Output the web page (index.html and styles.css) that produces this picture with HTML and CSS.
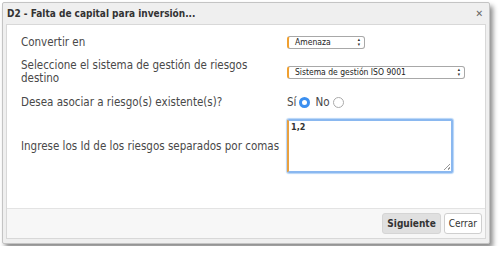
FILE: index.html
```html
<!DOCTYPE html>
<html lang="es">
<head>
    <meta charset="UTF-8">
    <title>Convertir riesgo</title>
    <link rel="stylesheet" href="styles.css">
</head>
<body>

    <div class="dialog">
        <div class="dialog-titlebar">
            <span class="dialog-title">D2 - Falta de capital para inversión...</span>
            <span class="dialog-close">&#x2715;</span>
        </div>
        <div class="dialog-panel">
            <div class="dialog-content">
                <div class="form-row">
                    <label class="form-label">Convertir en</label>
                    <div class="fake-select select-short">Amenaza</div>
                </div>
                <div class="form-row">
                    <label class="form-label">Seleccione el sistema de gestión de riesgos destino</label>
                    <div class="fake-select select-long">Sistema de gestión ISO 9001</div>
                </div>
                <div class="form-row">
                    <label class="form-label">Desea asociar a riesgo(s) existente(s)?</label>
                    <div class="radio-group">
                        <span>Sí</span><span class="radio checked"></span>
                        <span>No</span><span class="radio"></span>
                    </div>
                </div>
                <div class="form-row">
                    <label class="form-label">Ingrese los Id de los riesgos separados por comas</label>
                    <div class="textarea">1,2<span class="grip"></span></div>
                </div>
            </div>
            <div class="dialog-buttons">
                <button class="btn btn-primary">Siguiente</button>
                <button class="btn">Cerrar</button>
            </div>
        </div>
    </div>

</body>
</html>
```

FILE: styles.css
```css
/* ページ全体 */
body {
    margin: 0;
    padding: 2px;
    background: #ffffff;
    font-family: "DejaVu Sans Condensed", "Liberation Sans", sans-serif;
}

/* ダイアログ外枠 */
.dialog {
    width: 486px;
    height: 240px;
    border: 1px solid #c4c4c4;
    border-radius: 2px;
    background-color: #efefef;
    box-shadow: 3px 4px 5px rgba(0, 0, 0, 0.45);
    display: flex;
    flex-direction: column;
}

.dialog-titlebar {
    height: 21px;
    display: flex;
    align-items: center;
    justify-content: space-between;
    padding: 0 6px 0 4px;
}

.dialog-title {
    font-size: 10px;
    font-weight: bold;
    color: #333;
}

.dialog-close {
    font-size: 10px;
    font-weight: bold;
    color: #666;
}

/* 白い本体 */
.dialog-panel {
    flex: 1;
    margin: 0 3px 4px 3px;
    border: 1px solid #d8d8d8;
    background: #fff;
    display: flex;
    flex-direction: column;
}

.dialog-content {
    flex: 1;
    padding: 6px 14px 0 14px;
    display: grid;
    grid-template-columns: 266px auto;
    grid-auto-rows: auto;
    row-gap: 5px;
    align-content: start;
}

.form-row {
    display: contents;
}

.form-label {
    align-self: center;
    font-size: 11.5px;
    color: #484848;
    line-height: 13px;
    padding-right: 4px;
}

/* セレクト */
.fake-select {
    align-self: center;
    box-sizing: border-box;
    height: 13px;
    border: 1px solid #a8a8a8;
    border-left: 2px solid #f0a030;
    border-radius: 3px;
    font-size: 8.5px;
    line-height: 11px;
    padding-left: 6px;
    color: #222;
    background: #fff;
    position: relative;
    margin: 5px 0;
}

.fake-select::after {
    content: "\25B4\A\25BE";
    white-space: pre;
    position: absolute;
    right: 4px;
    top: 0;
    font-size: 5px;
    line-height: 5px;
    color: #222;
}

.select-short { width: 78px; }
.select-long { width: 178px; }

/* ラジオ */
.radio-group {
    display: flex;
    align-items: center;
    gap: 3px;
    font-size: 11.5px;
    color: #484848;
    height: 24px;
}

.radio {
    box-sizing: border-box;
    width: 11px;
    height: 11px;
    border-radius: 50%;
    border: 1px solid #aaa;
    background: #fff;
    margin-right: 2px;
}

.radio.checked {
    border: 3px solid #3b8ff0;
    background: #fff;
}

/* テキストエリア */
.textarea {
    box-sizing: border-box;
    width: 166px;
    height: 54px;
    border: 2px solid #8ab8f0;
    border-left: 2px solid #e8a040;
    border-radius: 2px;
    box-shadow: 0 0 1px 1px #b5d4f7;
    font-size: 9px;
    font-weight: bold;
    color: #333;
    padding: 1px 2px;
    position: relative;
    margin-top: 0;
}

.grip {
    position: absolute;
    right: 1px;
    bottom: 1px;
    width: 6px;
    height: 6px;
    background: linear-gradient(135deg, transparent 45%, #999 45%, #999 55%, transparent 55%, transparent 75%, #999 75%, #999 85%, transparent 85%);
}

/* ボタン列 */
.dialog-buttons {
    height: 29px;
    border-top: 1px solid #e3e3e3;
    background: #f7f7f7;
    display: flex;
    justify-content: flex-end;
    align-items: center;
    gap: 3px;
    padding-right: 3px;
}

.btn {
    height: 21px;
    padding: 0 4px;
    border: 1px solid #cfcfcf;
    border-radius: 3px;
    background: #fff;
    font-family: "DejaVu Sans Condensed", sans-serif;
    font-size: 10px;
    color: #333;
}

.btn-primary {
    background: #e0e0e0;
    font-weight: bold;
    border-color: #d5d5d5;
}
```
